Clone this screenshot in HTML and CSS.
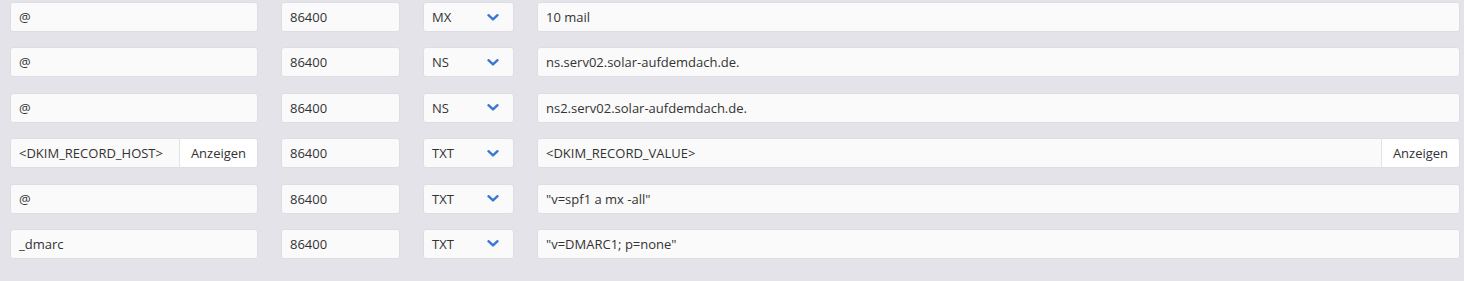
FILE: index.html
```html
<!DOCTYPE html>
<html lang="de">
<head>
    <meta charset="UTF-8">
    <title>DNS Records</title>
    <link rel="stylesheet" href="styles.css">
</head>
<body>
    <div class="records">
        <div class="record">
            <input class="field" type="text" value="@">
            <input class="field" type="text" value="86400">
            <div class="select"><span>MX</span><svg class="chevron" viewBox="0 0 12 7"><path d="M1.5 1.2 6 5.4 10.5 1.2"/></svg></div>
            <input class="field" type="text" value="10 mail">
        </div>
        <div class="record">
            <input class="field" type="text" value="@">
            <input class="field" type="text" value="86400">
            <div class="select"><span>NS</span><svg class="chevron" viewBox="0 0 12 7"><path d="M1.5 1.2 6 5.4 10.5 1.2"/></svg></div>
            <input class="field" type="text" value="ns.serv02.solar-aufdemdach.de.">
        </div>
        <div class="record">
            <input class="field" type="text" value="@">
            <input class="field" type="text" value="86400">
            <div class="select"><span>NS</span><svg class="chevron" viewBox="0 0 12 7"><path d="M1.5 1.2 6 5.4 10.5 1.2"/></svg></div>
            <input class="field" type="text" value="ns2.serv02.solar-aufdemdach.de.">
        </div>
        <div class="record">
            <div class="input-group">
                <input class="field" type="text" value="<DKIM_RECORD_HOST>">
                <button class="btn-show">Anzeigen</button>
            </div>
            <input class="field" type="text" value="86400">
            <div class="select"><span>TXT</span><svg class="chevron" viewBox="0 0 12 7"><path d="M1.5 1.2 6 5.4 10.5 1.2"/></svg></div>
            <div class="input-group">
                <input class="field" type="text" value="<DKIM_RECORD_VALUE>">
                <button class="btn-show">Anzeigen</button>
            </div>
        </div>
        <div class="record">
            <input class="field" type="text" value="@">
            <input class="field" type="text" value="86400">
            <div class="select"><span>TXT</span><svg class="chevron" viewBox="0 0 12 7"><path d="M1.5 1.2 6 5.4 10.5 1.2"/></svg></div>
            <input class="field" type="text" value="&quot;v=spf1 a mx -all&quot;">
        </div>
        <div class="record">
            <input class="field" type="text" value="_dmarc">
            <input class="field" type="text" value="86400">
            <div class="select"><span>TXT</span><svg class="chevron" viewBox="0 0 12 7"><path d="M1.5 1.2 6 5.4 10.5 1.2"/></svg></div>
            <input class="field" type="text" value="&quot;v=DMARC1; p=none&quot;">
        </div>
    </div>
</body>
</html>
```

FILE: styles.css
```css
body {
    margin: 0;
    background-color: #e4e3e9;
    font-family: "Open Sans", Arial, sans-serif;
    font-size: 13px;
    color: #333;
}

.records {
    display: flex;
    flex-direction: column;
    gap: 15.4px;
    padding: 2px 4px 0 10px;
}

.record {
    display: grid;
    grid-template-columns: 248px 119px 91px 1fr;
    gap: 23px;
    height: 30px;
}

.field {
    box-sizing: border-box;
    width: 100%;
    height: 30px;
    margin: 0;
    padding: 0 8px;
    background-color: #fafafa;
    border: 1px solid #dedde3;
    border-radius: 3px;
    font-family: inherit;
    font-size: 13px;
    color: #333;
    outline: none;
}

.select {
    box-sizing: border-box;
    height: 30px;
    display: flex;
    align-items: center;
    justify-content: space-between;
    padding: 0 14px 0 8px;
    background-color: #fafafa;
    border: 1px solid #dedde3;
    border-radius: 3px;
}

.chevron {
    width: 12px;
    height: 7px;
    fill: none;
    stroke: #3a78d8;
    stroke-width: 2.4;
    stroke-linecap: round;
    stroke-linejoin: round;
}

.input-group {
    display: flex;
    min-width: 0;
}

.input-group .field {
    flex: 1;
    min-width: 0;
    border-radius: 3px 0 0 3px;
}

.btn-show {
    box-sizing: border-box;
    height: 30px;
    width: 79px;
    margin: 0;
    padding: 0;
    background-color: #fff;
    border: 1px solid #dedde3;
    border-left: 1px solid #e3e3e3;
    border-radius: 0 3px 3px 0;
    font-family: inherit;
    font-size: 13px;
    color: #333;
    margin-left: -1px;
}
```
